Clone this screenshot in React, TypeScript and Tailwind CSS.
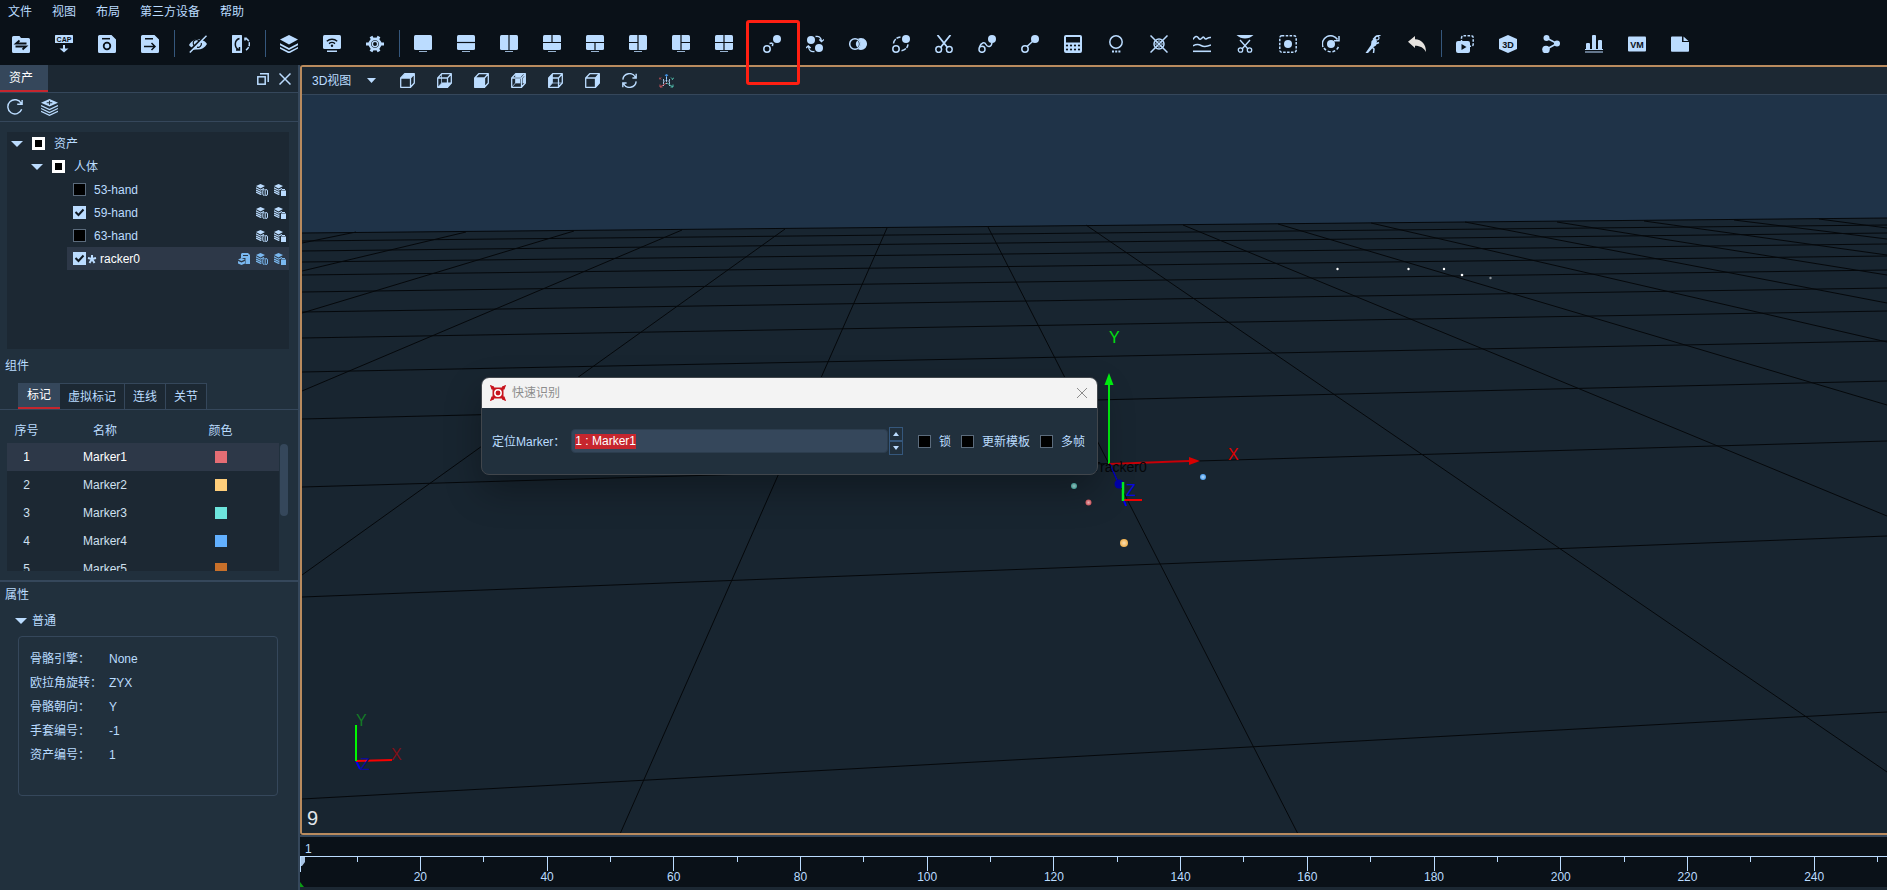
import React from 'react';

const DARK = '#0a1118';

/* ---------- toolbar icons ---------- */

const Svg = ({ children, className = 'size-[18px]' }: { children: React.ReactNode; className?: string }) => (
    <svg viewBox="0 0 18 18" fill="currentColor" className={className} aria-hidden="true">
        {children}
    </svg>
);

const Monitor = ({ split }: { split?: string }) => (
    <Svg>
        <rect x="0" y="0" width="18" height="15" rx="1.5" />
        <rect x="4" y="15" width="10" height="1" fill={DARK} />
        <rect x="5" y="16" width="8" height="1" opacity="0.8" />
        {split && <path d={split} stroke={DARK} strokeWidth="1.2" fill="none" />}
    </Svg>
);

const line = { fill: 'none', stroke: 'currentColor', strokeWidth: 1.5 };
const cut = { fill: 'none', stroke: DARK, strokeWidth: 1.5 };

const FolderSwap = () => (
    <Svg>
        <path d="M1.5 1h6L9 3h7.5A1.5 1.5 0 0 1 18 4.5v12a1.5 1.5 0 0 1-1.5 1.5h-15A1.5 1.5 0 0 1 0 16.5v-14A1.5 1.5 0 0 1 1.5 1z" />
        <path d="M14.5 8.500H4l3.500-3M3.500 11.500H14l-3.500 3" {...cut} strokeWidth="1.800" />
    </Svg>
);

const Cap = () => (
    <Svg>
        <rect width="18" height="8" rx="0.5" />
        <text x="9" y="6.800" textAnchor="middle" fontSize="7" fontWeight="bold" fill={DARK}>CAP</text>
        <path d="M8 10h2v3.500h3.500L9 17.500 4.500 13.500H8z" />
    </Svg>
);

const SaveRing = () => (
    <Svg>
        <path d="M1.5 0h12L18 4.5v12a1.5 1.5 0 0 1-1.5 1.5h-15A1.5 1.5 0 0 1 0 16.5v-15A1.5 1.5 0 0 1 1.5 0z" />
        <path d="M4 3.700h8" {...cut} />
        <circle cx="9" cy="11" r="3.300" {...cut} strokeWidth="1.800" />
    </Svg>
);

const SaveArrow = () => (
    <Svg>
        <path d="M1.5 0h12L18 4.5v12a1.5 1.5 0 0 1-1.5 1.5h-15A1.5 1.5 0 0 1 0 16.5v-15A1.5 1.5 0 0 1 1.5 0z" />
        <path d="M4 3.700h8M3 11.500h11M10.500 8l3.500 3.500-3.500 3.500" {...cut} />
    </Svg>
);

const EyeOff = () => (
    <Svg>
        <path d="M0 10C3 5 7 3.500 11 4l5-1-3 2c2 .7 4 2 5 4-2.500 4.500-6.500 6-11 5.500L3 15l1-2C2 12.300 1 11.500 0 10z" />
        <path d="M10.500 6.200A3.400 3.400 0 1 0 6 11M8 12.200A3.500 3.500 0 0 0 12.300 8" {...cut} strokeWidth="1.200" />
        <path d="M0 16.500L16.500 0" stroke={DARK} strokeWidth="2" />
        <path d="M.8 17.500L17.500.8" {...line} />
    </Svg>
);

const MirrorSwap = () => (
    <Svg>
        <rect width="10" height="18" rx="0.5" />
        <path d="M7.500 3.500C2 5 2 13 7 14.800M4 15h3.500v-3" {...cut} />
        <path d="M14 3.500c4.500 2 4.500 9 0 11.500M13 5.500V3.300h2.500" {...line} strokeDasharray="4 1" />
    </Svg>
);

const Layers = () => (
    <Svg>
        <path d="M9 0l9 4.500L9 9.500 0 4.500z" />
        <path d="M0 8.200l9 4.800 9-4.800v2L9 15 0 10.200zM0 12l9 4.500 9-4.500v1.500L9 18.500 0 13.800z" />
    </Svg>
);

const Wifi = () => (
    <Svg>
        <rect width="18" height="14" rx="1.500" />
        <rect x="4" y="15.500" width="10" height="1.500" />
        <path d="M3.800 6.200c3-2.700 7.400-2.700 10.400 0M6 8.600c2-1.600 4-1.600 6 0" {...cut} strokeWidth="1.400" />
        <circle cx="9" cy="10.800" r="1.200" fill={DARK} />
    </Svg>
);

const Gear = () => (
    <Svg>
        <circle cx="9" cy="9" r="4.800" fill="none" stroke="currentColor" strokeWidth="3.400" />
        <path d="M5 1.500l2 3.500M13 1.500l-2 3.500M0 9h3.500M14.500 9H18M5 16.500l2-3.500M13 16.500l-2-3.500" stroke="currentColor" strokeWidth="3.200" />
        <circle cx="9" cy="9" r="3.800" fill={DARK} />
        <circle cx="9" cy="9" r="2.600" {...line} strokeWidth="1.300" />
    </Svg>
);

const QuickMark = () => (
    <Svg>
        <circle cx="14" cy="4" r="4" />
        <circle cx="4" cy="14" r="3.200" {...line} />
        <path d="M6.500 8.500L10 7.800l-.6 3.400" {...line} strokeDasharray="3 1" />
    </Svg>
);

const SwapMarks = () => (
    <Svg>
        <circle cx="5" cy="5" r="4" />
        <circle cx="13" cy="13" r="4" />
        <path d="M9.500 1.500c3-.8 5.500.8 6 4.500M13.300 4.500l2.200 2.200L18 4.500M8.500 16.500c-3.500.5-5.700-1-6-5M0 13l2.300-2.200L4.700 13" {...line} strokeWidth="1.300" />
    </Svg>
);

const Overlap = () => (
    <Svg>
        <circle cx="6" cy="9" r="5.300" {...line} />
        <path d="M12 3a6 6 0 1 1-3 11.200 6.500 6.500 0 0 0 0-10.400A6 6 0 0 1 12 3z" />
        <path d="M8.500 5.500a4.500 4.500 0 0 0 0 7 5 5 0 0 0 0-7z" />
    </Svg>
);

const OrbitMarks = () => (
    <Svg>
        <circle cx="14" cy="4" r="4" />
        <circle cx="4" cy="14" r="3.200" {...line} />
        <path d="M1.500 8.500C2 5 4.500 2.500 8.500 2M9.500 15.800c3.500-.5 6-3 6.500-6.500" {...line} strokeDasharray="5 1" />
    </Svg>
);

const Scissors = () => (
    <Svg>
        <path d="M2.500 0l10 12.500M15.500 0l-10 12.500" {...line} strokeWidth="1.800" />
        <circle cx="3.700" cy="14.500" r="2.900" {...line} />
        <circle cx="14.300" cy="14.500" r="2.900" {...line} />
    </Svg>
);

const CurveMarks = () => (
    <Svg>
        <circle cx="14" cy="4" r="4" />
        <circle cx="4" cy="14.300" r="3" {...line} />
        <path d="M1.500 12C3 7.500 6.500 6.500 8 9.500s5.500 3 6-2" {...line} />
    </Svg>
);

const LinkMarks = () => (
    <Svg>
        <circle cx="14" cy="4" r="4" />
        <circle cx="4" cy="14" r="3.200" {...line} />
        <path d="M6 11.500L12 6" {...line} />
    </Svg>
);

const Calculator = () => (
    <Svg>
        <rect width="18" height="18" rx="2" />
        <path d="M2 2h14v5.500H2z" fill={DARK} />
        {[10.5, 14.5].map((y) =>
            [3, 7, 11, 15].map((x) => <circle key={`${x}-${y}`} cx={x} cy={y} r="1.100" fill={DARK} />)
        )}
    </Svg>
);

const CircleDots = () => (
    <Svg>
        <circle cx="9" cy="7" r="6.200" {...line} />
        <path d="M5 15.500h2v2H5zM8.200 15.500h2v2h-2zM11.400 15.500h2v2h-2z" />
    </Svg>
);

const CrossCircle = () => (
    <Svg>
        <circle cx="9" cy="9" r="5" {...line} />
        <path d="M.5.500l17 17M17.500.500l-17 17" {...line} />
        <path d="M9 5.500L12.500 9 9 12.500 5.500 9z" {...line} strokeWidth="1" />
    </Svg>
);

const Waves = () => (
    <Svg>
        <path d="M0 4.500C2 1 4 .5 5.500 3s2.500 1 4-.5 2 2 3.500 1.500 2-2 5-1.500M0 11c3-2 5.500-2 8-.5s5.500 1.500 10-.5" {...line} />
        <rect y="15.500" width="18" height="1.600" />
    </Svg>
);

const ScissorsDown = () => (
    <Svg>
        <path d="M.5 0h17C15 2.500 12 3.500 9 3.500S3 2.500.5 0z" />
        <path d="M4 5l8 9M14 5l-8 9" {...line} strokeWidth="1.400" />
        <circle cx="4.500" cy="15" r="2.200" {...line} strokeWidth="1.300" />
        <circle cx="13.500" cy="15" r="2.200" {...line} strokeWidth="1.300" />
    </Svg>
);

const DashedSquareDot = () => (
    <Svg>
        <rect x=".8" y=".8" width="16.400" height="16.400" rx="2" {...line} strokeDasharray="2.500 1.400" />
        <circle cx="9" cy="9" r="4" />
    </Svg>
);

const RotateDot = () => (
    <Svg>
        <path d="M1 12A8.200 8.200 0 0 1 15.500 4.500M17 1v4.800h-5" {...line} />
        <path d="M2 13a8.200 8.200 0 0 0 15-3" {...line} strokeDasharray="3 1.800" />
        <circle cx="9" cy="9" r="4" />
    </Svg>
);

const Runner = () => (
    <Svg>
        <circle cx="12" cy="3" r="2" {...line} strokeWidth="1.200" />
        <path d="M9.500 3.500L12 6l-1 4.500L8.500 12 3 18H.5L6 10l.5-4z" />
        <path d="M6.500 11.500L9 14l-.5 4M15.500 0L11 1.500 8 4.500M9 9.500l5-2" {...line} />
    </Svg>
);

const Undo = () => (
    <span className="text-[#e6e3df]">
        <Svg>
            <path d="M0 6.800L7 1v3.300c7 .5 11 5 11 12.700-2.300-4.200-5.500-6.300-11-6.300V13z" />
        </Svg>
    </span>
);

const PlayCopy = () => (
    <Svg>
        <rect x="5.500" y=".8" width="11.700" height="10.500" rx="2" {...line} strokeDasharray="2.600 1.400" />
        <rect x="0" y="6" width="14" height="12" rx="2" />
        <path d="M5.500 9l5 3-5 3z" fill={DARK} />
    </Svg>
);

const Hex3D = () => (
    <Svg>
        <path d="M9 0l9 4v10l-9 4-9-4V4z" />
        <text x="9" y="12.500" textAnchor="middle" fontSize="9" fontWeight="bold" fill={DARK}>3D</text>
    </Svg>
);

const Share = () => (
    <Svg>
        <circle cx="4.500" cy="3" r="3" />
        <circle cx="15" cy="8.500" r="3" />
        <circle cx="4" cy="14.500" r="3.800" />
        <path d="M4.500 3L15 8.500 4 14.500" {...line} strokeWidth="1.600" />
    </Svg>
);

const Bars = () => (
    <Svg>
        <path d="M1 9q0-1 1-1h2q1 0 1 1v5H1zM7 1q0-1 1-1h2q1 0 1 1v13H7zM13 6q0-1 1-1h2q1 0 1 1v8h-4z" />
        <path d="M0 14h18v1H0zM0 16.500h18v1H0z" />
    </Svg>
);

const Vm = () => (
    <Svg>
        <rect y="1.500" width="18" height="15" rx="1" />
        <text x="9" y="12.500" textAnchor="middle" fontSize="9" fontWeight="bold" fill={DARK}>VM</text>
    </Svg>
);

const Note = () => (
    <Svg>
        <path d="M1 1.500h10V7h7v9q0 .8-1 .8H1q-1 0-1-.8V2.500q0-1 1-1z" />
        <path d="M12.500 1.500l5 4.500h-5z" />
    </Svg>
);

const toolGroups: [string, React.ReactNode][][] = [
    [
        ['打开', <FolderSwap />],
        ['导入CAP', <Cap />],
        ['保存', <SaveRing />],
        ['另存为', <SaveArrow />],
    ],
    [
        ['隐藏', <EyeOff />],
        ['镜像', <MirrorSwap />],
    ],
    [
        ['图层', <Layers />],
        ['广播', <Wifi />],
        ['设置', <Gear />],
    ],
    [
        ['单视图', <Monitor />],
        ['上下视图', <Monitor split="M0 7.500h18" />],
        ['左右视图', <Monitor split="M9 0v15" />],
        ['上二下一', <Monitor split="M0 7.500h18M9 0v7" />],
        ['上一下二', <Monitor split="M0 7.500h18M9 8v7" />],
        ['左二右一', <Monitor split="M9 0v15M0 7.500h9" />],
        ['左一右二', <Monitor split="M9 0v15M9 7.500h9" />],
        ['四视图', <Monitor split="M9 0v15M0 7.500h18" />],
    ],
    [
        ['快速识别', <QuickMark />],
        ['交换', <SwapMarks />],
        ['合并', <Overlap />],
        ['轨迹', <OrbitMarks />],
        ['剪切', <Scissors />],
        ['曲线', <CurveMarks />],
        ['连接', <LinkMarks />],
        ['计算', <Calculator />],
        ['补点', <CircleDots />],
        ['删除', <CrossCircle />],
        ['平滑', <Waves />],
        ['裁剪', <ScissorsDown />],
        ['框选', <DashedSquareDot />],
        ['旋转', <RotateDot />],
        ['动作', <Runner />],
        ['撤销', <Undo />],
    ],
    [
        ['播放', <PlayCopy />],
        ['3D', <Hex3D />],
        ['分享', <Share />],
        ['图表', <Bars />],
        ['VM', <Vm />],
        ['笔记', <Note />],
    ],
];

/* ---------- small shared pieces ---------- */

const Triangle = () => (
    <svg viewBox="0 0 12 6" className="w-3 h-[6px] shrink-0" fill="#bbdcff" aria-hidden="true">
        <path d="M0 0h12L6 6z" />
    </svg>
);

const CheckBox = ({ id, checked, partial }: { id: string; checked?: boolean; partial?: boolean }) => (
    <span className="grid size-[13px] shrink-0">
        <input
            id={id}
            type="checkbox"
            defaultChecked={checked}
            className={
                partial
                    ? 'appearance-none [grid-area:1/1] size-[13px] bg-black border-[3px] border-white'
                    : 'appearance-none [grid-area:1/1] size-[13px] bg-black border border-[#5b6b7c] checked:bg-[#bbdcff] checked:border-[#bbdcff]'
            }
        />
        {checked && (
            <svg viewBox="0 0 13 13" className="[grid-area:1/1] size-[13px] pointer-events-none" aria-hidden="true">
                <path d="M2.500 6l3 3L10.500 3.500" fill="none" stroke="#101a24" strokeWidth="2" />
            </svg>
        )}
    </span>
);

const StackIcon = ({ solid }: { solid?: boolean }) => (
    <svg viewBox="0 0 12 12" className="size-3" fill="currentColor" aria-hidden="true">
        <path d="M4.500 0L9 2 4.500 4.500 0 2z" />
        <path d="M0 3.800l4.500 2.400L8 4.500M0 6l4.500 2.400 1-.5M0 8l4.500 2.300 1-.5" fill="none" stroke="currentColor" strokeWidth="1.200" />
        {solid ? (
            <path d="M7 6.500h5V12H7zM8 5h3v1H8z" />
        ) : (
            <path d="M8.300 5.500q-1.500 0-1.500 1.500v3q0 1.500 1.500 1.500M10 5.500q1.500 0 1.500 1.500v3q0 1.500-1.500 1.500M9.200 5v7" fill="none" stroke="currentColor" />
        )}
    </svg>
);

const SaveStackIcon = () => (
    <svg viewBox="0 0 12 12" className="size-3" fill="currentColor" aria-hidden="true">
        <path d="M4 0h6l2 2v9H7.500V5H3V1z" />
        <path d="M5 2.500h5" stroke="#2d3848" />
        <path d="M0 6.500L3.500 5 7 6.500 3.500 8zM0 8l3.500 1.500L7 8v2.500L3.500 12 0 10.500z" />
    </svg>
);

/* ---------- left dock ---------- */

const assets = [
    { name: '53-hand', checked: false },
    { name: '59-hand', checked: true },
    { name: '63-hand', checked: false },
];

const AssetTree = () => (
    <div className="ml-[7px] mr-[9px] mt-[10px] h-[217px] bg-[#1c2833]">
        <div className="flex items-center h-[23px] pl-1">
            <Triangle />
            <span className="ml-[9px] flex"><CheckBox id="all" partial /></span>
            <label htmlFor="all" className="ml-[9px]">资产</label>
        </div>
        <div className="flex items-center h-[23px] pl-6">
            <Triangle />
            <span className="ml-[9px] flex"><CheckBox id="body" partial /></span>
            <label htmlFor="body" className="ml-[9px]">人体</label>
        </div>
        {assets.map((asset) => (
            <div key={asset.name} className="flex items-center h-[23px] pl-[66px] pr-[3px]">
                <CheckBox id={asset.name} checked={asset.checked} />
                <label htmlFor={asset.name} className="ml-2 flex-1">{asset.name}</label>
                <div className="flex gap-[6px]">
                    <button aria-label="骨骼"><StackIcon /></button>
                    <button aria-label="删除"><StackIcon solid /></button>
                </div>
            </div>
        ))}
        <div className="flex items-center h-[23px] ml-[60px] pl-[6px] pr-[3px] bg-[#2d3848] text-white">
            <CheckBox id="racker0" checked />
            <svg viewBox="0 0 10 10" className="size-[10px] ml-[1px]" stroke="#bbdcff" strokeWidth="2" aria-hidden="true">
                <path d="M5 5V1M5 5L1 4M5 5l4-1M5 5L2.500 9M5 5l2.500 4" />
            </svg>
            <label htmlFor="racker0" className="ml-[3px] flex-1">racker0</label>
            <div className="flex gap-[6px] text-[#7ab8f0]">
                <button aria-label="保存"><SaveStackIcon /></button>
                <button aria-label="骨骼"><StackIcon /></button>
                <button aria-label="删除"><StackIcon solid /></button>
            </div>
        </div>
    </div>
);

const markers = [
    { id: 1, swatch: 'bg-[#e56d74]' },
    { id: 2, swatch: 'bg-[#ffce7a]' },
    { id: 3, swatch: 'bg-[#6de5dd]' },
    { id: 4, swatch: 'bg-[#62b0ff]' },
    { id: 5, swatch: 'bg-[#c8702a]' },
];

const MarkerTable = () => (
    <div className="flex items-start ml-[7px] mr-[10px] mt-[9px] gap-[1px]">
        <div className="flex-1 h-[152px] overflow-hidden">
            <table className="w-full table-fixed text-center">
                <thead>
                    <tr className="h-6">
                        <th className="w-[39px] p-0 font-normal">序号</th>
                        <th className="w-[118px] p-0 font-normal">名称</th>
                        <th className="p-0 pr-[2px] font-normal">颜色</th>
                    </tr>
                </thead>
                <tbody className="bg-[#1c2833] text-[#cfe0f0]">
                    {markers.map((m) => (
                        <tr key={m.id} className={m.id === 1 ? 'h-7 bg-[#2d3848] text-white' : 'h-7'}>
                            <td className="p-0">{m.id}</td>
                            <td className="p-0">Marker{m.id}</td>
                            <td className="p-0 pr-[2px]"><div className={`size-3 mx-auto ${m.swatch}`} /></td>
                        </tr>
                    ))}
                </tbody>
            </table>
        </div>
        <div className="w-2 h-[72px] mt-[25px] rounded-sm bg-[#35475b]" />
    </div>
);

const properties = [
    ['骨骼引擎：', 'None'],
    ['欧拉角旋转：', 'ZYX'],
    ['骨骼朝向：', 'Y'],
    ['手套编号：', '-1'],
    ['资产编号：', '1'],
];

const LeftDock = () => (
    <aside className="w-[298px] shrink-0 bg-[#21303d] flex flex-col">
        <div className="flex items-center h-7 bg-[#1c2833] border-b border-[#35475b]">
            <button className="h-[27px] w-12 pr-[6px] bg-[#35475b] text-white border-b-2 border-[#c6262e]">资产</button>
            <div className="flex-1" />
            <button aria-label="浮动" className="mr-[10px]">
                <svg viewBox="0 0 12 12" className="size-3" fill="none" stroke="#bbdcff" aria-hidden="true">
                    <path d="M3 .8h8.200V9" strokeWidth="1.500" />
                    <rect x=".8" y="3.800" width="7.400" height="7.400" strokeWidth="1.500" />
                </svg>
            </button>
            <button aria-label="关闭" className="mr-[7px]">
                <svg viewBox="0 0 12 12" className="size-3" stroke="#bbdcff" strokeWidth="1.500" aria-hidden="true">
                    <path d="M.5.500l11 11M11.500.500l-11 11" />
                </svg>
            </button>
        </div>
        <div className="flex items-center h-[29px] pl-[7px] gap-[18px] border-b border-[#35475b]">
            <button aria-label="刷新">
                <Svg className="size-4">
                    <path d="M16.500 11.500A8 8 0 1 1 16 5M17 1v5h-5.500" fill="none" stroke="currentColor" strokeWidth="1.600" />
                </Svg>
            </button>
            <button aria-label="图层">
                <Svg className="size-[17px]">
                    <path d="M9 0l9 4L9 8 0 4z" />
                    <path d="M9 1.800v4.400M6 4h6" stroke="#21303d" strokeWidth="1.200" />
                    <path d="M0 7l9 4.300L18 7M0 10l9 4.300 9-4.300M0 13l9 4.300 9-4.300" fill="none" stroke="currentColor" strokeWidth="1.300" />
                </Svg>
            </button>
        </div>

        <AssetTree />

        <h2 className="mt-[9px] pl-[5px] h-4 leading-4">组件</h2>
        <div className="flex pl-[18px] mt-[9px] border-b border-[#35475b]">
            <button className="w-[42px] h-[26px] bg-[#35475b] text-white border-b-2 border-[#c6262e]">标记</button>
            <button className="w-[65px] h-[26px] pt-[1px] bg-[#1c2833] border-t border-r border-[#35475b]">虚拟标记</button>
            <button className="w-[41px] h-[26px] pt-[1px] bg-[#1c2833] border-t border-r border-[#35475b]">连线</button>
            <button className="w-[41px] h-[26px] pt-[1px] bg-[#1c2833] border-t border-r border-[#35475b]">关节</button>
        </div>
        <MarkerTable />

        <section className="mt-[9px] border-t-2 border-[#35475b] flex-1">
            <h2 className="mt-[5px] pl-[5px] h-4 leading-4">属性</h2>
            <div className="flex items-center gap-[5px] pl-[15px] mt-[10px] h-4">
                <Triangle />
                <span>普通</span>
            </div>
            <dl className="ml-[18px] mr-5 mt-[7px] pt-[10px] pb-7 pl-[11px] border border-[#35475b] rounded">
                {properties.map(([label, value]) => (
                    <div key={label} className="flex items-center h-6">
                        <dt className="w-[79px]">{label}</dt>
                        <dd>{value}</dd>
                    </div>
                ))}
            </dl>
        </section>
    </aside>
);

/* ---------- 3D view ---------- */

const Cube = ({ face }: { face: 'top' | 'bottom' | 'front' | 'back' | 'left' | 'right' }) => {
    const faces = {
        top: 'M1 5l4-4.300h9.500L10.500 5z',
        bottom: 'M1 14l4-4.300h9.500L10.500 14z',
        front: 'M.5 5h10v9.500H.5z',
        back: 'M4.500.500h10V10h-10z',
        left: 'M.5 5l4-4.500V10l-4 4.500z',
        right: 'M10.500 5l4-4.500V10l-4 4.500z',
    };
    const open = face === 'bottom' || face === 'back' || face === 'left';
    return (
        <svg viewBox="0 0 15 15" className="size-[15px]" fill="none" stroke="currentColor" strokeWidth="1.300" strokeLinejoin="round" aria-hidden="true">
            <path d={faces[face]} fill="currentColor" stroke="none" />
            {open && <path d="M4.500 1v9h10M4.500 10L1 14" strokeWidth="1" opacity="0.7" />}
            {face === 'back' && <path d="M1.500 5h9v9M10.500 5l3-3.500" stroke="#1c2833" strokeWidth="2.200" />}
            <path d="M.7 5L4.700.7h9.600V10l-3.800 4.300H.7zM.7 5h9.800v9.300M10.500 5L14.300.7" />
        </svg>
    );
};

const ViewToolbar = () => (
    <div className="flex items-center h-7 shrink-0 bg-[#1c2833] border-b border-[#35475b]">
        <button className="flex items-center w-[98px] pl-[10px] gap-4">
            <span>3D视图</span>
            <svg viewBox="0 0 9 5" className="w-[9px] h-[5px]" fill="currentColor" aria-hidden="true">
                <path d="M0 0h9L4.500 5z" />
            </svg>
        </button>
        <div className="flex gap-[22px]">
            <button aria-label="顶视图"><Cube face="top" /></button>
            <button aria-label="底视图"><Cube face="bottom" /></button>
            <button aria-label="前视图"><Cube face="front" /></button>
            <button aria-label="后视图"><Cube face="back" /></button>
            <button aria-label="左视图"><Cube face="left" /></button>
            <button aria-label="右视图"><Cube face="right" /></button>
            <button aria-label="重置">
                <Svg className="size-[15px]">
                    <path d="M1 8A8 8 0 0 1 16 5M17 1v5h-4.500M17 10A8 8 0 0 1 2 13M1 17v-5h4.500" fill="none" stroke="currentColor" strokeWidth="1.700" />
                </Svg>
            </button>
            <button aria-label="坐标轴">
                <svg viewBox="0 0 15 15" className="size-[15px]" fill="none" strokeWidth="1" aria-hidden="true">
                    <path d="M7.500 8V2M6 3l1.500-2L9 3" stroke="#3f8fe0" />
                    <path d="M7.500 10L1 14M0 4.500l2 2M2 4.500l-2 2M1 11.500V14h2.500" stroke="#c05058" />
                    <path d="M8 10l6 4M11.500 14H14v-2.500M12 4.500l1.500 1.500M15 4.500L13 7" stroke="#4fb8a8" />
                    <path d="M7.500 4v7M4.500 6v7M10.500 6v7M4 9l3.500-2L11 9" stroke="#bbdcff" strokeDasharray="2 1" opacity="0.8" />
                </svg>
            </button>
        </div>
    </div>
);

// floor grid: [x1, y1, x2, y2]
const gridLines = [
    [302, 233, 1887, 218],
    [302, 241, 1887, 225],
    [302, 251, 1887, 233],
    [302, 262, 1887, 244],
    [302, 275, 1887, 256],
    [302, 292, 1887, 270],
    [302, 312, 1887, 288],
    [302, 338, 1887, 311],
    [302, 372, 1887, 341],
    [302, 419, 1887, 381],
    [302, 487, 1887, 441],
    [302, 597, 1887, 536],
    [302, 799, 1887, 712],
    [356, 232, 302, 243],
    [466, 232, 302, 271],
    [574, 231, 302, 313],
    [682, 230, 302, 391],
    [785, 229, 302, 575],
    [887, 228, 620, 834],
    [988, 227, 1298, 834],
    [1086, 225, 1887, 772],
    [1183, 225, 1887, 516],
    [1278, 224, 1887, 405],
    [1371, 223, 1887, 342],
    [1465, 222, 1887, 303],
    [1557, 222, 1887, 275],
    [1644, 221, 1887, 255],
    [1734, 220, 1887, 239],
    [1819, 219, 1887, 228],
];

const Scene = () => (
    <svg
        viewBox="302 95 1585 738"
        preserveAspectRatio="xMidYMid slice"
        className="absolute inset-0 w-full h-full"
        fontFamily="'Liberation Sans', Arial, sans-serif"
        fontSize="16"
        role="img"
        aria-label="3D视图"
    >
        <defs>
            <radialGradient id="shine">
                <stop offset="0" stopColor="#fff" stopOpacity="0.6" />
                <stop offset="1" stopColor="#fff" stopOpacity="0" />
            </radialGradient>
        </defs>
        <rect x="302" y="95" width="1585" height="738" fill="#1f3348" />
        <path d="M302 233L1887 218V833H302z" fill="#182530" />
        <g stroke="#05080b" strokeWidth="1">
            {gridLines.map(([x1, y1, x2, y2], i) => (
                <line key={i} x1={x1} y1={y1} x2={x2} y2={y2} />
            ))}
        </g>

        <g fill="#fff">
            <circle cx="1337.500" cy="269" r="1.200" />
            <circle cx="1408.500" cy="269" r="1.200" />
            <circle cx="1444" cy="269" r="1.200" />
            <circle cx="1462" cy="275" r="1.300" />
            <circle cx="1490.500" cy="278" r="1.200" opacity="0.5" />
        </g>

        {/* tracked body */}
        <path d="M1109 464V384" stroke="#00f010" strokeWidth="2" />
        <path d="M1109 373l4.500 12h-9z" fill="#00f010" />
        <text x="1109" y="343" fill="#00e010">Y</text>
        <path d="M1109 464l80-3" stroke="#c80008" strokeWidth="2" />
        <path d="M1200 461l-11-4v8z" fill="#d80000" />
        <text x="1228" y="460" fill="#e00000">X</text>
        <path d="M1110 464l7 16" stroke="#0000c0" strokeWidth="1.500" />
        <circle cx="1119" cy="484" r="4.500" fill="#0000a8" />
        <text x="1126" y="496" fill="#0808e0">Z</text>
        <text x="1092" y="472" fontSize="14" fill="#04070a">Tracker0</text>
        <path d="M1124 501l2 5" stroke="#0000f0" strokeWidth="2" />
        <path d="M1124 500h18" stroke="#f00000" strokeWidth="2" />
        <path d="M1123 501V482" stroke="#00f020" strokeWidth="2.500" />

        {[
            [1074, 486, 3, '#4fb8b0'],
            [1088.5, 502.5, 3, '#d4545c'],
            [1203, 477, 3, '#4a9ff0'],
            [1124, 543, 4, '#f0b04c'],
        ].map(([cx, cy, r, fill]) => (
            <g key={cx as number}>
                <circle cx={cx} cy={cy} r={r} fill={fill as string} />
                <circle cx={cx} cy={cy} r={r} fill="url(#shine)" />
            </g>
        ))}

        {/* world axes */}
        <path d="M356 761l4 8" stroke="#0000f0" strokeWidth="2" />
        <path d="M356 761l36-1" stroke="#f80000" strokeWidth="2" />
        <path d="M356 761V725" stroke="#00f800" strokeWidth="2" />
        <text x="356" y="726" fill="#147a26">Y</text>
        <text x="391" y="760" fill="#801018">X</text>
        <text x="360" y="770" fill="#0c0c98">Z</text>
    </svg>
);

const SmallArrow = ({ d }: { d: string }) => (
    <svg viewBox="0 0 6 4" className="w-[6px] h-1" fill="#bbdcff" aria-hidden="true">
        <path d={d} />
    </svg>
);

const QuickDialog = () => (
    <div
        role="dialog"
        aria-label="快速识别"
        className="absolute left-[179px] top-[282px] w-[617px] rounded-lg border border-[#41464c] bg-[#21303d] overflow-hidden shadow-[0_16px_36px_rgba(0,0,0,0.3)]"
    >
        <div className="flex items-center h-[30px] pl-2 pr-[10px] bg-[#f3f3f3] text-[#8c8c8c]">
            <svg viewBox="0 0 16 16" className="size-4" aria-hidden="true">
                <path d="M0 0L4.500 2.500h7L16 0l-2.500 4.500v7L16 16l-4.500-2.500h-7L0 16l2.500-4.500v-7z" fill="#c8141e" />
                <path d="M0 0l4 1.500v3H1.500zM16 0l-4 1.500v3h2.500zM0 16l4-1.500v-3H1.500zM16 16l-4-1.500v-3h2.500z" fill="#c8141e" />
                <circle cx="8" cy="8" r="3.200" fill="none" stroke="#fff" strokeWidth="1.500" />
            </svg>
            <span className="ml-[6px] flex-1">快速识别</span>
            <button aria-label="关闭">
                <svg viewBox="0 0 10 10" className="size-[10px]" stroke="#8c8c8c" aria-hidden="true">
                    <path d="M0 0l10 10M10 0L0 10" />
                </svg>
            </button>
        </div>
        <div className="flex items-center h-[66px] pl-[10px] pr-3">
            <label htmlFor="marker" className="pt-[2px]">定位Marker：</label>
            <div className="flex items-center flex-1 h-6 ml-[6px] pl-[3px] rounded-sm bg-[#35475b] border border-[#2c3d4e]">
                <input
                    id="marker"
                    defaultValue="1 : Marker1"
                    className="field-sizing-content h-[15px] leading-[15px] bg-[#c6262e] text-white outline-none"
                />
            </div>
            <div className="flex flex-col w-[14px] ml-[1px] mr-[15px]">
                <button aria-label="上一个" className="grid place-items-center h-[14px] border border-[#35577c]">
                    <SmallArrow d="M3 0l3 4H0z" />
                </button>
                <button aria-label="下一个" className="grid place-items-center h-[14px] border border-[#35577c]">
                    <SmallArrow d="M0 0h6L3 4z" />
                </button>
            </div>
            <CheckBox id="lock" />
            <label htmlFor="lock" className="ml-2 mr-[10px] pt-[2px]">锁</label>
            <CheckBox id="template" />
            <label htmlFor="template" className="ml-2 mr-[10px] pt-[2px]">更新模板</label>
            <CheckBox id="frames" />
            <label htmlFor="frames" className="ml-2 pt-[2px]">多帧</label>
        </div>
    </div>
);

/* ---------- timeline ---------- */

const FRAMES = 250.5;
const ticks = Array.from({ length: 25 }, (_, i) => (i + 1) * 10);

const Timeline = () => (
    <div className="h-[55px] shrink-0 border-t-2 border-[#35475b] bg-[#0a1118] border-b-[3px] border-b-[#1c2833] flex flex-col">
        <div className="h-[19px] pl-[5px] pt-1 leading-4">1</div>
        <div className="relative flex-1 border-t border-[#bbdcff]">
            {ticks.map((t) => (
                <div
                    key={t}
                    className="absolute top-0 flex w-10 -ml-5 flex-col items-center"
                    style={{ left: `${((t - 1) / FRAMES) * 100}%` }}
                >
                    <div className={t % 20 === 0 ? 'w-px h-[14px] bg-[#bbdcff]' : 'w-px h-[5px] bg-[#bbdcff]'} />
                    {t % 20 === 0 && <span className="leading-3">{t}</span>}
                </div>
            ))}
            <svg viewBox="0 0 5 30" className="absolute left-0 top-0 w-[5px] h-[30px]" aria-hidden="true">
                <path d="M0 0h5v5L2 9H0z" fill="#a8c4e4" />
                <path d="M.5 0v15" stroke="#bbdcff" />
                <path d="M0 25l4 5H0z" fill="#0a9a14" />
            </svg>
        </div>
    </div>
);

const App = () => {
    return (
        <div className="flex flex-col h-screen w-full overflow-hidden bg-[#0a1118] text-[12px] leading-4 text-[#bbdcff] font-['Liberation_Sans','Noto_Sans_CJK_SC',sans-serif]">
            <nav className="flex items-center h-[22px] pt-[2px] pl-2 gap-5 shrink-0">
                {['文件', '视图', '布局', '第三方设备', '帮助'].map((item) => (
                    <button key={item}>{item}</button>
                ))}
            </nav>
            <div className="flex items-center h-[43px] shrink-0">
                {toolGroups.map((group, g) => (
                    <React.Fragment key={g}>
                        {g > 0 && <div className="w-px h-[27px] mx-[2px] shrink-0 bg-[#35577c]" />}
                        {group.map(([label, icon]) => (
                            <button key={label} aria-label={label} className="relative w-[43px] h-[43px] pl-3 shrink-0">
                                {icon}
                                {label === '快速识别' && (
                                    <span className="absolute -left-[5px] -top-[2px] z-10 w-[54px] h-[65px] border-3 border-[#ff1f12] rounded-[3px]" />
                                )}
                            </button>
                        ))}
                    </React.Fragment>
                ))}
            </div>
            <div className="flex flex-1 min-h-0">
                <LeftDock />
                <main className="flex flex-1 flex-col min-w-0 border-l-2 border-[#35475b]">
                    <div className="flex flex-1 flex-col min-h-0 border-2 border-r-0 border-[#b98b5e] rounded-l-[3px] overflow-hidden">
                        <ViewToolbar />
                        <div className="relative flex-1 overflow-hidden">
                            <Scene />
                            <QuickDialog />
                            <span className="absolute left-[5px] bottom-[3px] text-[20px] leading-6 text-[#e2e6ea]">9</span>
                        </div>
                    </div>
                    <Timeline />
                </main>
            </div>
        </div>
    );
};

export default App;
